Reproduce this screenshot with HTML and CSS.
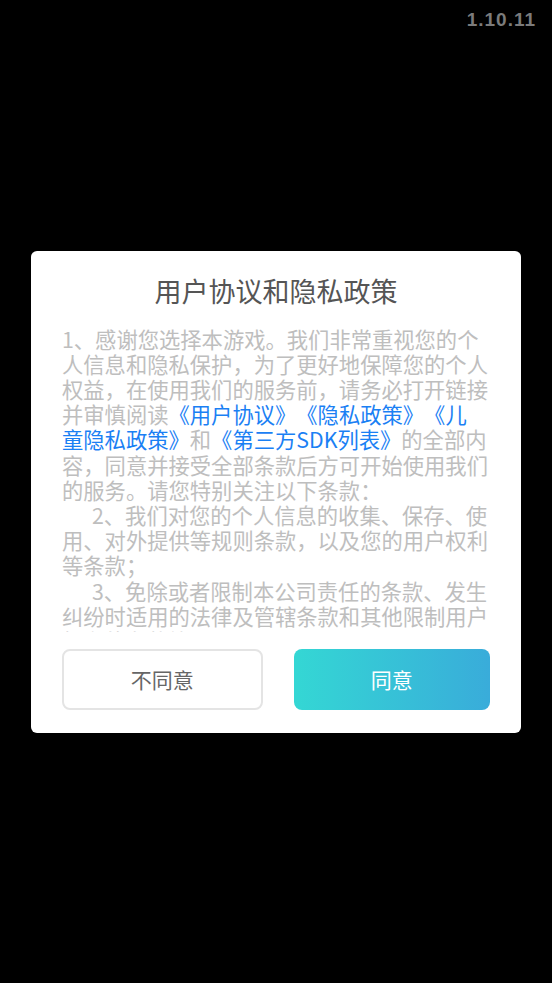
FILE: index.html
```html
<!DOCTYPE html>
<html lang="zh-CN">
<head>
<meta charset="utf-8">
<title>用户协议和隐私政策</title>
<link rel="stylesheet" href="styles.css">
</head>
<body>
<div class="screen">
  <div class="version">1.10.11</div>
  <div class="dialog">
    <h1 class="title">用户协议和隐私政策</h1>
    <div class="content">
      <p class="para first">1、感谢您选择本游戏。我们非常重视您的个人信息和隐私保护，为了更好地保障您的个人权益，在使用我们的服务前，请务必打开链接并审慎阅读<span class="link">《用户协议》</span><span class="link">《隐私政策》</span><span class="link">《儿<br>童隐私政策》</span>和<span class="link">《第三方SDK列表》</span>的全部内容，同意并接受全部条款后方可开始使用我们的服务。请您特别关注以下条款：</p>
      <p class="para">2、我们对您的个人信息的收集、保存、使用、对外提供等规则条款，以及您的用户权利等条款；</p>
      <p class="para">3、免除或者限制本公司责任的条款、发生纠纷时适用的法律及管辖条款和其他限制用户权利的条款等。</p>
      <p class="para">4、如您同意以上内容，请点击“同意”开始使用我们的服务。</p>
    </div>
    <div class="actions">
      <button class="btn btn-decline">不同意</button>
      <button class="btn btn-agree">同意</button>
    </div>
  </div>
</div>
</body>
</html>
```

FILE: styles.css
```css
html, body {
  margin: 0;
  padding: 0;
  background: #000;
}

.screen {
  width: 552px;
  height: 983px;
  display: grid;
  grid-template: 1fr / 1fr;
  background: #000;
}

.version {
  grid-area: 1 / 1;
  justify-self: end;
  align-self: start;
  margin: 8px 16px 0 0;
  font-family: "Liberation Sans", Arial, sans-serif;
  font-weight: bold;
  font-size: 19px;
  letter-spacing: 1px;
  color: #7b7b7b;
  line-height: 24px;
}

.dialog {
  grid-area: 1 / 1;
  justify-self: center;
  align-self: center;
  box-sizing: border-box;
  width: 490px;
  height: 482px;
  background: #fff;
  border-radius: 6px;
  padding: 0 31px 23px;
  display: flex;
  flex-direction: column;
  font-family: "Noto Sans CJK SC", "Noto Sans", sans-serif;
  text-spacing-trim: space-all;
}

.title {
  margin: 22px 0 17px;
  font-size: 27px;
  line-height: 36px;
  font-weight: normal;
  color: #555;
  text-align: center;
}

.content {
  height: 306px;
  flex: none;
  overflow: hidden;
  font-size: 21.3px;
  line-height: 25.2px;
  color: #bebebe;
}

.para {
  margin: 0;
  text-indent: 30px;
}

.para.first {
  text-indent: 0;
}

.link {
  color: #1a80f4;
}

.actions {
  margin-top: 17px;
  display: flex;
  gap: 31px;
}

.btn {
  flex: 1 1 0;
  min-width: 0;
  height: 61px;
  border-radius: 8px;
  font-family: "Noto Sans CJK SC", "Noto Sans", sans-serif;
  font-size: 21px;
  padding: 0;
  cursor: pointer;
}

.btn-decline {
  background: #fff;
  border: 2px solid #e4e4e4;
  color: #666;
}

.btn-agree {
  border: none;
  color: #fff;
  background: linear-gradient(to right, #34d7d4, #39acda);
}
```
